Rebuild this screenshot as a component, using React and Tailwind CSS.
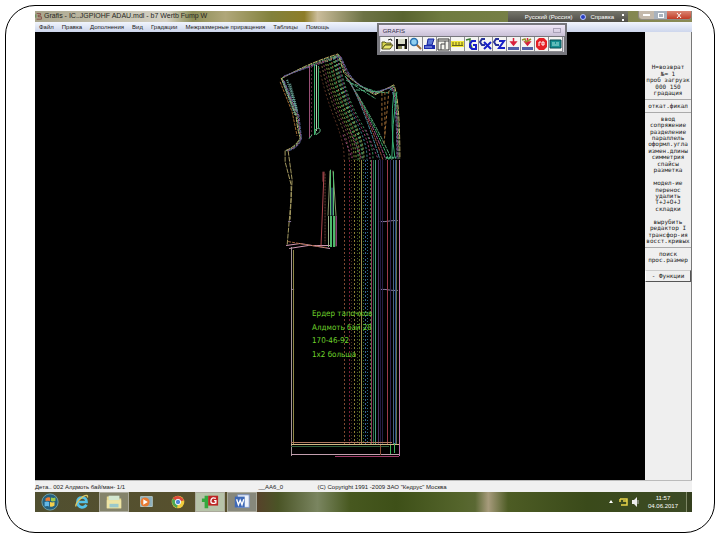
import React from "react";

const menus = [
  "Файл",
  "Правка",
  "Дополнения",
  "Вид",
  "Градации",
  "Межразмерные приращения",
  "Таблицы",
  "Помощь",
];

// "-" is a divider, "" an empty row
const commands = [
  "Н=возврат",
  "№= 1",
  "проб загрузк",
  "000 150",
  "градация",
  "-",
  "откат.фикал",
  "-",
  "ввод",
  "сопряжение",
  "разделение",
  "параллель",
  "оформл.угла",
  "измен.длины",
  "симметрия",
  "спайсы",
  "разметка",
  "",
  "модел-ие",
  "перенос",
  "удалить",
  "T+J+O+J",
  "складки",
  "",
  "вырубить",
  "редактор I",
  "трансфор-ия",
  "восст.кривых",
  "-",
  "поиск",
  "прос.размер",
  "",
];

// Vertical grading lines: x, colour, dash
const gradeLines = [
  [344, "#7d4a30", "2 2"],
  [349, "#7a2038", "2 2"],
  [351, "#4a2c20", "1 2"],
  [354, "#8c8034", "2 2"],
  [357, "#3d5c20", "1 2"],
  [359, "#5c6a24", "2 2"],
  [361, "#9a8a48", ""],
  [363, "#2c7a3c", "1 2"],
  [365, "#3a5f94", "2 2"],
  [367, "#2f6f8c", "1 2"],
  [370, "#3f7c3c", "2 2"],
  [371, "#8c3a58", ""],
  [373, "#2e6b4e", ""],
  [375, "#45a080", ""],
  [378, "#4b2f66", ""],
  [380, "#241c42", ""],
  [382, "#2a2048", ""],
  [387, "#9c3a48", ""],
  [390, "#2d2450", ""],
  [393, "#4a6688", ""],
  [395, "#28508a", ""],
  [396, "#66704a", ""],
  [399, "#c076ac", ""],
];

// Lines that fan from the shoulder down to the grading lines
const fanLines = [
  [318, 63, 344, "#5c3424"],
  [321, 62, 349, "#7a6840"],
  [323, 61, 352, "#8a3a54"],
  [325, 60, 354, "#6e9a3c"],
  [327, 60, 356, "#a09a50"],
  [329, 59, 358, "#3fae5c"],
  [330, 59, 359, "#4a8c48"],
  [331, 58, 360, "#b88a50"],
  [333, 57, 362, "#49b684"],
  [334, 57, 363, "#7ab06a"],
  [335, 56, 364, "#8fb858"],
  [336, 56, 367, "#3f8fa0"],
  [337, 55, 370, "#b04a80"],
  [338, 55, 373, "#40a86a"],
];

const outlineColors = ["#c9b46a", "#5fae7c", "#a85a86", "#55659a"];

const gradients = {
  title:
    "bg-[linear-gradient(90deg,#a9a58c_0%,#c6c2b0_12%,#d5d2c6_20%,#8d8e58_24%,#b0a77a_29%,#82813c_36%,#8d7d28_41%,#cbbd9b_43%,#6d7345_50%,#59642f_56%,#6f7b40_62%,#8a8b56_100%)]",
  task: "bg-[linear-gradient(90deg,#504f30_0%,#59512d_30%,#56432a_34%,#4a5426_37%,#7a8560_43%,#47581f_48%,#3e5018_55%,#55652c_65%,#5a6833_67%,#a79b7c_69%,#4d5c24_72%,#3a4a1a_84%,#3c4a26_100%)]",
};

function ToolIcon({ name }) {
  switch (name) {
    case "Открыть":
      return (
        <>
          <path d="M1 5h3l1 1h5v2H4l-3 4z" fill="#d6d44a" stroke="#55551c" />
          <path d="M4 8h8l-3 4H1z" fill="#e9e66c" stroke="#55551c" />
          <path d="M7 3l3-1 1 2" fill="none" stroke="#222" />
        </>
      );
    case "Сохранить":
      return (
        <>
          <path d="M1 2h11v10H1z" fill="#111" />
          <path d="M3 2h7v5H3z" fill="#d9dcc8" />
          <path d="M3 9h7v3H3z" fill="#86885a" />
          <path d="M7 9h2v3H7z" fill="#eee" />
        </>
      );
    case "Лупа":
      return (
        <>
          <path d="M7 7l5 5" stroke="#a06a38" strokeWidth="2" />
          <circle cx="5" cy="5" r="3.5" fill="#8fd0f2" stroke="#2a6fae" strokeWidth="1.5" />
        </>
      );
    case "Печать":
      return (
        <>
          <path d="M5 2h6l-2 6H4z" fill="#5c78d6" stroke="#15209c" />
          <path d="M1 8h11v4H1z" fill="#1c2cae" />
          <path d="M2 10h7" stroke="#aab8f2" />
        </>
      );
    case "Окна":
      return (
        <>
          <path d="M1 2h11v11H1z" fill="#f5f5ee" stroke="#333" />
          <path d="M1 4h11M8 4v3H4v6M8 7v5" fill="none" stroke="#444" />
        </>
      );
    case "Линейка":
      return (
        <>
          <path d="M0 4h13v6H0z" fill="#efe53a" />
          <path d="M1 8.500h11M2 5v4M5 5v4M8 5v4M11 5v4" stroke="#68661c" />
        </>
      );
    case "Слой G":
      return (
        <>
          <path d="M1 3l4-1v4l2 5" fill="none" stroke="#3a7a34" strokeWidth="1.5" />
          <path d="M11 4H7L5 7v3l2 2h4V8H8" fill="none" stroke="#1720c8" strokeWidth="2" />
        </>
      );
    case "Слой X":
      return (
        <>
          <path d="M6 2H3L1 5l2 3h3" fill="none" stroke="#28329a" strokeWidth="2" />
          <path d="M5 5l7 7M12 5l-7 7" stroke="#1720c8" strokeWidth="2" />
        </>
      );
    case "Слой Z":
      return (
        <>
          <path d="M6 2H3L1 5l2 3h3" fill="none" stroke="#28329a" strokeWidth="2" />
          <path d="M6 4h5l-5 7h6" fill="none" stroke="#1720c8" strokeWidth="2" />
        </>
      );
    case "Вставить":
    case "Вставить все":
      return (
        <>
          <path d="M6.500 1v7M4 5l2.500 3L9 5z" fill="#d8203c" stroke="#d8203c" strokeWidth="1.5" />
          {name === "Вставить все" && <path d="M1 3l3-1 1 3 5-3" fill="none" stroke="#96922c" strokeWidth="1.5" />}
          <path d="M1 10h11v3H1z" fill="#5260a8" />
        </>
      );
    case "Стоп":
      return (
        <>
          <path d="M4 1h5l3 3v6l-3 3H4l-3-3V4z" fill="#e51f25" />
          <path d="M4 5v4M4 5h2M7 5h2v3H7z" fill="none" stroke="#fff" />
        </>
      );
    default:
      return (
        <>
          <path d="M1 3h11v8H1z" fill="#178f92" stroke="#0b4a52" />
          <path d="M3 6h3M7 6h3M3 8h7" stroke="#a9e6e0" />
        </>
      );
  }
}

const tools = [
  "Открыть",
  "Сохранить",
  "Лупа",
  "Печать",
  "Окна",
  "Линейка",
  "Слой G",
  "Слой X",
  "Слой Z",
  "Вставить",
  "Вставить все",
  "Стоп",
  "Экран",
];

function Toolbox() {
  return (
    <section className="absolute left-[52%] top-3 z-10 border-2 border-[#77777d] bg-[#d9d8df] font-['Liberation_Sans']">
      <header className="flex h-[11px] items-center justify-between bg-gradient-to-b from-[#f0e8f8] to-[#c9c0d6] px-1 text-[6px] leading-none text-[#34304a]">
        <h2>GRAFIS</h2>
        <button aria-label="Закрыть панель" className="h-[5px] w-2 border border-[#aaa2b8]" />
      </header>
      <div className="flex border border-[#77777d] px-px">
        {tools.map((name) => (
          <button
            key={name}
            aria-label={name}
            className="h-[15px] w-[14px] border-r border-b border-[#8b8b90] bg-[#f4f4f2]"
          >
            <svg viewBox="0 0 13 14" className="h-[14px] w-[13px]">
              <ToolIcon name={name} />
            </svg>
          </button>
        ))}
      </div>
    </section>
  );
}

function TitleBar() {
  return (
    <header className={`flex h-[11px] items-start ${gradients.title}`}>
      <svg viewBox="0 0 10 10" className="mr-px h-[10px] w-2">
        <path d="M2 2h5v2H4v2h4v3H2" fill="none" stroke="#7d3b38" />
        <path d="M1 3v4" stroke="#3f7d3c" />
      </svg>
      <h1 className="flex-1 text-[7px] leading-[10px] whitespace-nowrap text-[#26261e]">
        Grafis - IC..JGPIOHF ADAU.mdl - b7 Wertb Fump W
      </h1>
      <div className="mr-[10px] flex h-[12px] w-[120px] items-center justify-end gap-2 bg-gradient-to-b from-[#76766c] to-[#4c4b45] pr-1 text-[6px] leading-none whitespace-nowrap text-white">
        <span>Русский (Россия)</span>
        <span className="flex items-center gap-1">
          <span className="h-[6px] w-[6px] rounded-full border border-[#b9c6ff] bg-[#2b3fc0]" />
          Справка
        </span>
        <span className="h-[7px] w-[2px] border-y-2 border-white" />
      </div>
      <div className="flex h-[9px] overflow-hidden rounded-b-sm border border-t-0 border-[#8e8a80] text-white">
        <button aria-label="Свернуть" className="flex w-[15px] items-center justify-center bg-[#c4b9ab]">
          <span className="h-[2px] w-[7px] bg-white" />
        </button>
        <button aria-label="Развернуть" className="flex w-[13px] items-center justify-center bg-[#a9b2bd]">
          <span className="h-[5px] w-[6px] border border-white" />
        </button>
        <button aria-label="Закрыть" className="flex w-6 items-center justify-center bg-gradient-to-b from-[#d98472] to-[#c23a24]">
          <svg viewBox="0 0 6 5" className="h-[5px] w-[6px]">
            <path d="M1 0l4 5M5 0L1 5" stroke="#fff" />
          </svg>
        </button>
      </div>
    </header>
  );
}

function Pattern() {
  return (
    <svg
      viewBox="35 32 610 449"
      preserveAspectRatio="xMidYMid meet"
      className="absolute inset-0 h-full w-full"
      fill="none"
      strokeWidth="1"
    >
      {/* armhole, shoulder and neck */}
      {outlineColors.map((c, i) => (
        <g key={c} stroke={c} strokeDasharray={i % 2 ? "3 1" : "5 1"}>
          <path d={`M${281 + i} ${79 - i}Q${306 + i} ${64 + i} ${338 + i} ${54 + i}L${344 + i} ${73 - i}Q356 ${84 + i} 375 ${95 - i}L${394 - i} ${85 + i}Q${400 - i} 100 ${400 - i} 159`} />
          <path d={`M${281 + i} ${78 + i}L${296 + i} 116Q${297 + i} 128 ${300 + i / 2} 138Q${296 + i} ${147 + i / 2} ${285 + i} 151`} />
        </g>
      ))}
      <path d="M283 82L295 115M287 80L297 112M290 84L297 110" stroke="#6aa69a" strokeDasharray="1 1" strokeWidth="2" />
      <path d="M280 82L292 112L297 136" stroke="#a06a32" strokeDasharray="3 1" />
      <path d="M285 151V162L291 185V199L287 246M288 151L292 180L290 220" stroke="#a59a60" strokeDasharray="5 1" />
      <path d="M286 246L300 244L330 249M289 249L308 246L331 246" stroke="#d39ab6" />
      <path d="M288 242L305 245L326 248" stroke="#a0603a" strokeDasharray="3 1" />
      <path d="M288 222h3M294 290h-3M380 222h5l8-1h5M380 290h5l8 1h5" stroke="#8d7aa0" />

      {/* shoulder dart */}
      <g shapeRendering="crispEdges">
        <path d="M309.5 66V138" stroke="#9a4f76" />
        <path d="M311.5 66V136" stroke="#542a3c" strokeDasharray="2 2" />
        <path d="M314.5 64V135M318.5 66V128" stroke="#38b46a" />
        <path d="M316.5 65V131" stroke="#b8d2b2" />
      </g>
      <path d="M309 139l3-4M315 130q6-4 5 2l-4 3z" stroke="#5fae7c" />

      {/* waist dart */}
      <path d="M324 172L321 246M323 172v10" stroke="#b04a50" />
      <path d="M325 174V244" stroke="#6c4436" strokeDasharray="2 1" />
      <path d="M330 171L328 216M333 171L336 216V247" stroke="#8c9a6a" />
      <path d="M330.5 170V216M333.5 172V216" stroke="#58c072" />
      <path d="M332 188v28" stroke="#4170a0" />
      <g shapeRendering="crispEdges">
        <path d="M328.5 216V247" stroke="#9ab48a" />
        <path d="M331 216V247M334 216V247" stroke="#4fb86c" strokeWidth="2" />
        <path d="M336.5 216V246" stroke="#8a3a78" />
      </g>

      {/* neck and sleeve seam */}
      {fanLines.map(([x, y, end, color]) => (
        <path
          key={end}
          d={`M${x} ${y}Q${x + 7} 95 ${(x + end) / 2 + 4} 120T${end} 160`}
          stroke={color}
          strokeDasharray="2 2"
        />
      ))}
      {[0, 3, 6, 9, 12].map((d, i) => (
        <path
          key={d}
          d={`M${345 + i} ${76 + i}Q${368 - i} 108 ${392 - d} 160`}
          stroke={["#5fae7c", "#38b46a", "#9a4f86", "#a04c40", "#498c9c"][i]}
          strokeDasharray="4 1"
        />
      ))}
      <path d="M346 80L376 99M350 83L380 93M356 90L388 93L392 88" stroke="#4caa78" strokeDasharray="4 1" />
      <path d="M382 93V128M385 92V136M389 91L384 145" stroke="#9c6a34" strokeDasharray="3 2" />
      <path d="M394 92Q390 125 395 158M397 92Q392 125 392 158" stroke="#36b074" />
      <path d="M343 135L352 158M350 130L362 160M366 130L378 159" stroke="#9a407a" strokeDasharray="2 2" />
      <path d="M386 158h10" stroke="#50b484" strokeWidth="2" strokeDasharray="2 1" />

      <g shapeRendering="crispEdges">
        {gradeLines.map(([x, color, dash]) => (
          <path key={x} d={`M${x + 0.5} 160V445`} stroke={color} strokeDasharray={dash} />
        ))}
        <path d="M399.5 445V457" stroke="#c076ac" />
        <path d="M291.5 247V457" stroke="#a49498" />
        <path d="M293.5 250V445" stroke="#8f8848" />
        {/* hem */}
        <path d="M291 443.5H392" stroke="#b07a62" />
        <path d="M291 445.5H399" stroke="#d4bb86" />
        <path d="M291 447.5H389" stroke="#31603c" />
        <path d="M291 455.5H399" stroke="#c4a0b0" />
        <path d="M335 457.5H399" stroke="#a03c68" />
        <path d="M380.5 446V456" stroke="#8c5038" />
        <path d="M390.5 446V455M394.5 444V454" stroke="#3eb45c" />
      </g>

      <g
        fill="#6fd42c"
        fontSize="8"
        fontFamily="'DejaVu Sans Condensed', 'DejaVu Sans', sans-serif"
      >
        <text x="312" y="317">Ердер тапочков</text>
        <text x="312" y="331">Алдмоть бай 28</text>
        <text x="312" y="344">170-46-92</text>
        <text x="312" y="358">1x2 больша</text>
      </g>
    </svg>
  );
}

function CommandPanel() {
  return (
    <aside className="w-[47px] shrink-0 border-r border-[#777] bg-[#efefef] pt-8 font-['DejaVu_Sans_Mono',monospace] text-[6px] text-[#222]">
      <ul className="grid h-[206px] auto-rows-fr">
        {commands.map((label, i) => (
          <li key={i} className="flex items-center justify-center leading-none whitespace-pre">
            {label === "-" ? <hr className="w-full border-[#aaa]" /> : label}
          </li>
        ))}
      </ul>
      <button className="h-[12px] w-full border border-t-[#ccc] border-r-[#555] border-b-[#555] border-l-white leading-none whitespace-nowrap">
        - Функции
      </button>
    </aside>
  );
}

const apps = [
  {
    name: "Пуск",
    icon: (
      <>
        <circle cx="10" cy="10" r="9" fill="#24607e" stroke="#73a6b0" />
        <path d="M5 6q3-2 5-1v4q-2-1-5 0z" fill="#ed7a35" />
        <path d="M11 5q3 1 5 0v4q-3 1-5 0z" fill="#9fc94a" />
        <path d="M4 10q3-1 5 0v5q-2-1-5 0z" fill="#64b9e8" />
        <path d="M10 10q3 1 5 0v4q-3 2-5 1z" fill="#f5cf4d" />
      </>
    ),
  },
  {
    name: "Internet Explorer",
    icon: (
      <>
        <path d="M15 13q-2 3-5 3-5-1-5-6t5-5q5 0 5 5H6" fill="none" stroke="#54c1e8" strokeWidth="3" />
        <path d="M3 15q0-5 8-11 6-3 5 1" fill="none" stroke="#d9c766" strokeWidth="1.5" />
      </>
    ),
  },
  {
    name: "Проводник",
    active: "bg-[#999984]/70",
    icon: (
      <>
        <path d="M2 4h6l1 2h9v11H2z" fill="#e7d98e" />
        <path d="M4 3h12v5H4z" fill="#d3e7d0" />
        <path d="M2 8h16v9H2z" fill="#eee5a5" />
        <path d="M5 12h10v4H5z" fill="#9bc9cb" />
      </>
    ),
  },
  {
    name: "Проигрыватель",
    icon: (
      <>
        <path d="M4 4h13v11H4z" fill="#8aaebd" stroke="#b8ccc9" />
        <circle cx="9" cy="10" r="5" fill="#e97b32" />
        <path d="M7 7l5 3-5 3z" fill="#fff" />
      </>
    ),
  },
  {
    name: "Chrome",
    icon: (
      <>
        <circle cx="10" cy="10" r="7" fill="#f0cc3d" />
        <path d="M10 10L4 6q6-6 13 2z" fill="#dd4b3c" />
        <path d="M10 10L4 6q-3 7 5 11z" fill="#4da652" />
        <circle cx="10" cy="10" r="3" fill="#4e86d8" stroke="#fff" />
      </>
    ),
  },
  {
    name: "Grafis",
    active: "bg-[#b7c3a9]",
    icon: (
      <>
        <path d="M1 6h3V3h4v14H4v-7H1z" fill="#34a83e" />
        <path d="M8 3h11v11H8z" fill="#bd2524" />
        <path d="M16.500 6q-5-2-5.500 2.500t5.500 2.500V8.500h-2" fill="none" stroke="#fff" strokeWidth="1.5" />
      </>
    ),
  },
  {
    name: "Word",
    active: "bg-[#87887c]",
    icon: (
      <>
        <path d="M5 2h13v14H5z" fill="#eef3fb" stroke="#7993c8" />
        <path d="M2 4h11v12H2z" fill="#3e69b7" />
        <path d="M4 7l2 6 2-5 2 5 2-6" fill="none" stroke="#fff" strokeWidth="1.5" />
      </>
    ),
  },
];

function Taskbar() {
  return (
    <footer className={`flex h-5 items-center justify-between ${gradients.task}`}>
      <nav className="flex h-full gap-[2px]">
        {apps.map((app) => (
          <button
            key={app.name}
            aria-label={app.name}
            className={`flex h-full w-[30px] items-center justify-center ${app.active ? `border border-[#aaa99b] ${app.active}` : ""}`}
          >
            <svg viewBox="0 0 20 20" className="h-[18px] w-[18px]">
              {app.icon}
            </svg>
          </button>
        ))}
      </nav>
      <div className="flex h-full items-center text-white">
        <svg viewBox="0 0 34 12" className="mr-2 h-3 w-[34px]">
          <path d="M3 7l2-3 2 3z" fill="#fff" />
          <path d="M14 3h7v6h-6M14 3v3M17 5h4" fill="none" stroke="#e8d44a" strokeWidth="1.5" />
          <path d="M26 4h2l3-3v10l-3-3h-2z" fill="#eee" />
          <path d="M32 4v4" stroke="#bbb" />
        </svg>
        <time className="mr-2 text-center text-[6px] leading-[8px]">
          11:57
          <br />
          04.06.2017
        </time>
        <span className="h-full w-[6px] border-l border-[#7f8867] bg-[#35401f]" />
      </div>
    </footer>
  );
}

export default function App() {
  return (
    <div className="flex min-h-screen bg-white px-[5px] pt-[5px] pb-[7px] font-['Liberation_Sans',sans-serif]">
      <div className="flex flex-1 rounded-[30px] border border-black pt-[5px] pr-[22px] pb-[20px] pl-[29px]">
        <main className="relative flex min-w-0 flex-1 flex-col">
          <TitleBar />
          <nav className="flex h-[10px] items-center gap-2 bg-gradient-to-b from-[#f1f5fd] to-[#cdd6ec] px-1 text-[6px] leading-none whitespace-nowrap text-[#222]">
            {menus.map((item) => (
              <button key={item}>{item}</button>
            ))}
          </nav>
          <Toolbox />
          <div className="flex flex-1">
            <div className="relative flex-1 bg-black">
              <Pattern />
            </div>
            <CommandPanel />
          </div>
          <div className="flex h-[12px] items-center border-t border-[#bbb] bg-[#f0f0f0] text-[6px] leading-none whitespace-nowrap text-[#222]">
            <span className="w-[34%]">Дета.. 002 Алдмоть бай/ман- 1/1</span>
            <span className="w-[9%]">__AA6_0</span>
            <span>(C) Copyright 1991 -2009 ЗАО "Кедрус" Москва</span>
          </div>
          <Taskbar />
        </main>
      </div>
    </div>
  );
}
